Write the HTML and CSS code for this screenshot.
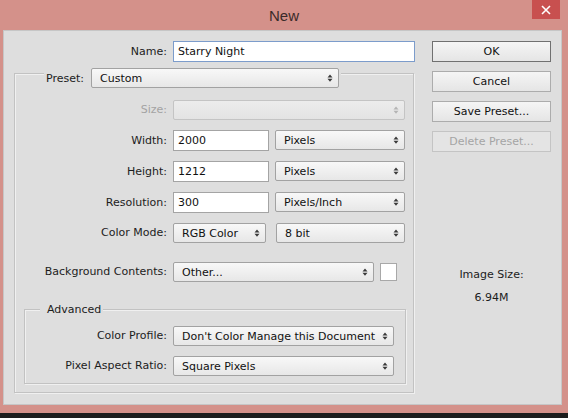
FILE: index.html
```html
<!DOCTYPE html>
<html>
<head>
<meta charset="utf-8">
<title>New</title>
<link rel="stylesheet" href="styles.css">
</head>
<body>
<div class="window">
  <div class="titlebar">
    <span></span>
    <span class="title">New</span>
    <div class="close"><svg width="10" height="10" viewBox="0 0 10 10"><path d="M1 1L9 9M9 1L1 9" stroke="#fff" stroke-width="1.6" fill="none"/></svg></div>
  </div>
  <div class="client">
    <div class="form">
      <div class="row name-row">
        <span class="lbl lh21">Name:</span>
        <div class="input name">Starry Night</div>
      </div>
      <div class="box outer">
        <div class="legend preset">
          <span>Preset:</span>
          <div class="select w-preset"><span>Custom</span><svg class="arr" width="6" height="10" viewBox="0 0 6 10"><path d="M0.5 4.5L3 1.5L5.5 4.5ZM0.5 5.8L3 8.8L5.5 5.8Z"/></svg></div>
        </div>
        <div class="rows top-rows">
          <div class="row">
            <span class="lbl dim">Size:</span>
            <div class="select dis w-size"><span></span><svg class="arr" width="6" height="10" viewBox="0 0 6 10"><path d="M0.5 4.5L3 1.5L5.5 4.5ZM0.5 5.8L3 8.8L5.5 5.8Z"/></svg></div>
          </div>
          <div class="row">
            <span class="lbl lh21">Width:</span>
            <div class="input w-num">2000</div>
            <div class="select w-units"><span>Pixels</span><svg class="arr" width="6" height="10" viewBox="0 0 6 10"><path d="M0.5 4.5L3 1.5L5.5 4.5ZM0.5 5.8L3 8.8L5.5 5.8Z"/></svg></div>
          </div>
          <div class="row">
            <span class="lbl lh21">Height:</span>
            <div class="input w-num">1212</div>
            <div class="select w-units"><span>Pixels</span><svg class="arr" width="6" height="10" viewBox="0 0 6 10"><path d="M0.5 4.5L3 1.5L5.5 4.5ZM0.5 5.8L3 8.8L5.5 5.8Z"/></svg></div>
          </div>
          <div class="row">
            <span class="lbl lh21">Resolution:</span>
            <div class="input w-num">300</div>
            <div class="select w-units"><span>Pixels/Inch</span><svg class="arr" width="6" height="10" viewBox="0 0 6 10"><path d="M0.5 4.5L3 1.5L5.5 4.5ZM0.5 5.8L3 8.8L5.5 5.8Z"/></svg></div>
          </div>
          <div class="row">
            <span class="lbl">Color Mode:</span>
            <div class="select w-mode"><span>RGB Color</span><svg class="arr" width="6" height="10" viewBox="0 0 6 10"><path d="M0.5 4.5L3 1.5L5.5 4.5ZM0.5 5.8L3 8.8L5.5 5.8Z"/></svg></div>
            <div class="select w-bits"><span>8 bit</span><svg class="arr" width="6" height="10" viewBox="0 0 6 10"><path d="M0.5 4.5L3 1.5L5.5 4.5ZM0.5 5.8L3 8.8L5.5 5.8Z"/></svg></div>
          </div>
        </div>
        <div class="row bg-row">
          <span class="lbl">Background Contents:</span>
          <div class="select w-bg"><span>Other...</span><svg class="arr" width="6" height="10" viewBox="0 0 6 10"><path d="M0.5 4.5L3 1.5L5.5 4.5ZM0.5 5.8L3 8.8L5.5 5.8Z"/></svg></div>
          <div class="swatch"></div>
        </div>
        <div class="box adv">
          <div class="legend adv-legend">Advanced</div>
          <div class="rows adv-rows">
            <div class="row">
              <span class="lbl">Color Profile:</span>
              <div class="select w-adv"><span>Don't Color Manage this Document</span><svg class="arr" width="6" height="10" viewBox="0 0 6 10"><path d="M0.5 4.5L3 1.5L5.5 4.5ZM0.5 5.8L3 8.8L5.5 5.8Z"/></svg></div>
            </div>
            <div class="row">
              <span class="lbl">Pixel Aspect Ratio:</span>
              <div class="select w-adv"><span>Square Pixels</span><svg class="arr" width="6" height="10" viewBox="0 0 6 10"><path d="M0.5 4.5L3 1.5L5.5 4.5ZM0.5 5.8L3 8.8L5.5 5.8Z"/></svg></div>
            </div>
          </div>
        </div>
      </div>
    </div>
    <div class="side">
      <div class="btns">
        <div class="btn ok">OK</div>
        <div class="btn">Cancel</div>
        <div class="btn">Save Preset...</div>
        <div class="btn btn-dis">Delete Preset...</div>
      </div>
      <div class="imgsize">
        <div>Image Size:</div>
        <div class="imgval">6.94M</div>
      </div>
    </div>
  </div>
  <div class="taskbar"></div>
</div>
</body>
</html>
```
FILE: styles.css
```css
html, body {
  margin: 0;
  padding: 0;
}
body {
  width: 568px;
  height: 418px;
  overflow: hidden;
  background: #d4918a;
  font-family: "DejaVu Sans", sans-serif;
  font-size: 11px;
  color: #1c1c1c;
}
.titlebar {
  height: 30px;
  display: grid;
  grid-template-columns: 1fr auto 1fr;
  align-items: start;
}
.title {
  font-family: "Liberation Sans", sans-serif;
  font-size: 15px;
  line-height: 18px;
  padding-top: 7px;
  color: #3a2b29;
}
.close {
  justify-self: end;
  margin-right: 8px;
  width: 28px;
  height: 19px;
  background: #c8504f;
  display: flex;
  align-items: center;
  justify-content: center;
}
.client {
  margin-left: 3px;
  width: 559px;
  height: 375px;
  box-sizing: border-box;
  background: #dedede;
  border: 1px solid #c6c6c6;
  display: flex;
}
.form {
  margin-left: 10px;
  padding-top: 10px;
  width: 402px;
  flex: none;
}
.side {
  margin-left: auto;
  margin-right: 10px;
  padding-top: 10px;
  width: 119px;
  display: flex;
  flex-direction: column;
}
.row {
  display: flex;
  align-items: flex-start;
}
.lbl {
  flex: none;
  text-align: right;
  margin-right: 6px;
  white-space: nowrap;
  line-height: 20px;
}
.lbl.lh21 {
  line-height: 21px;
}
.dim {
  color: #a3a3a3;
}
.name-row .lbl {
  width: 153px;
}
.input {
  flex: none;
  height: 21px;
  box-sizing: border-box;
  background: #fff;
  border: 1px solid #a4a4a4;
  padding-left: 4px;
  display: flex;
  align-items: center;
  color: #111;
}
.name {
  width: 242px;
  border-color: #7c9ccb;
}
.box {
  box-sizing: border-box;
  border: 1px solid #c2c2c2;
  box-shadow: inset 1px 1px 0 #f0f0f0, 1px 1px 0 #f0f0f0;
}
.outer {
  margin-top: 11px;
  width: 400px;
  padding-bottom: 8px;
}
.legend {
  display: flex;
  align-items: center;
  width: fit-content;
  background: #dedede;
}
.preset {
  margin-top: -6px;
  margin-left: 29px;
  padding: 0 2px;
  height: 20px;
}
.preset .select {
  margin-left: 7px;
}
.select {
  flex: none;
  height: 20px;
  box-sizing: border-box;
  border: 1px solid #a2a2a2;
  border-radius: 2px;
  background: linear-gradient(#f8f8f8, #e7e7e7);
  display: flex;
  align-items: center;
  justify-content: space-between;
  padding: 0 5px 0 8px;
  color: #111;
  white-space: nowrap;
}
.select .arr {
  fill: #3a3a3a;
  flex: none;
}
.select.dis {
  border-color: #c4c4c4;
  background: linear-gradient(#ececec, #e3e3e3);
}
.select.dis .arr {
  fill: #b4b4b4;
}
.w-preset { width: 248px; }
.w-size { width: 232px; }
.w-num { width: 96px; }
.w-units { width: 130px; margin-left: 6px; }
.w-mode { width: 93px; }
.w-bits { width: 129px; margin-left: 10px; }
.w-bg { width: 201px; }
.w-adv { width: 221px; }
.rows {
  display: flex;
  flex-direction: column;
  gap: 10px;
}
.top-rows {
  margin-top: 12px;
}
.outer .lbl {
  width: 152px;
}
.bg-row {
  margin-top: 19px;
}
.swatch {
  flex: none;
  margin-left: 6px;
  margin-top: 1px;
  width: 17px;
  height: 18px;
  box-sizing: border-box;
  background: #fff;
  border: 1px solid #a8a8a8;
}
.adv {
  margin: 27px 0 0 9px;
  width: 382px;
  padding-bottom: 7px;
}
.adv-legend {
  margin-top: -7px;
  margin-left: 15px;
  padding: 0 2px 0 7px;
  line-height: 14px;
  height: 14px;
}
.adv-rows {
  margin-top: 9px;
}
.adv .lbl {
  width: 142px;
}
.btns {
  display: flex;
  flex-direction: column;
  gap: 9px;
}
.btn {
  height: 21px;
  box-sizing: border-box;
  border: 1px solid #acacac;
  background: linear-gradient(#f5f5f5, #e5e5e5);
  display: flex;
  align-items: center;
  justify-content: center;
  color: #111;
}
.btn.ok {
  border-color: #707070;
}
.btn.btn-dis {
  color: #a4a4a4;
  border-color: #c4c4c4;
  background: #e4e4e4;
}
.imgsize {
  margin-top: 116px;
  text-align: center;
  line-height: 14px;
  color: #1c1c1c;
}
.imgval {
  margin-top: 9px;
}
.taskbar {
  margin-top: 8px;
  height: 5px;
  background: #1d1d1d;
}
```
